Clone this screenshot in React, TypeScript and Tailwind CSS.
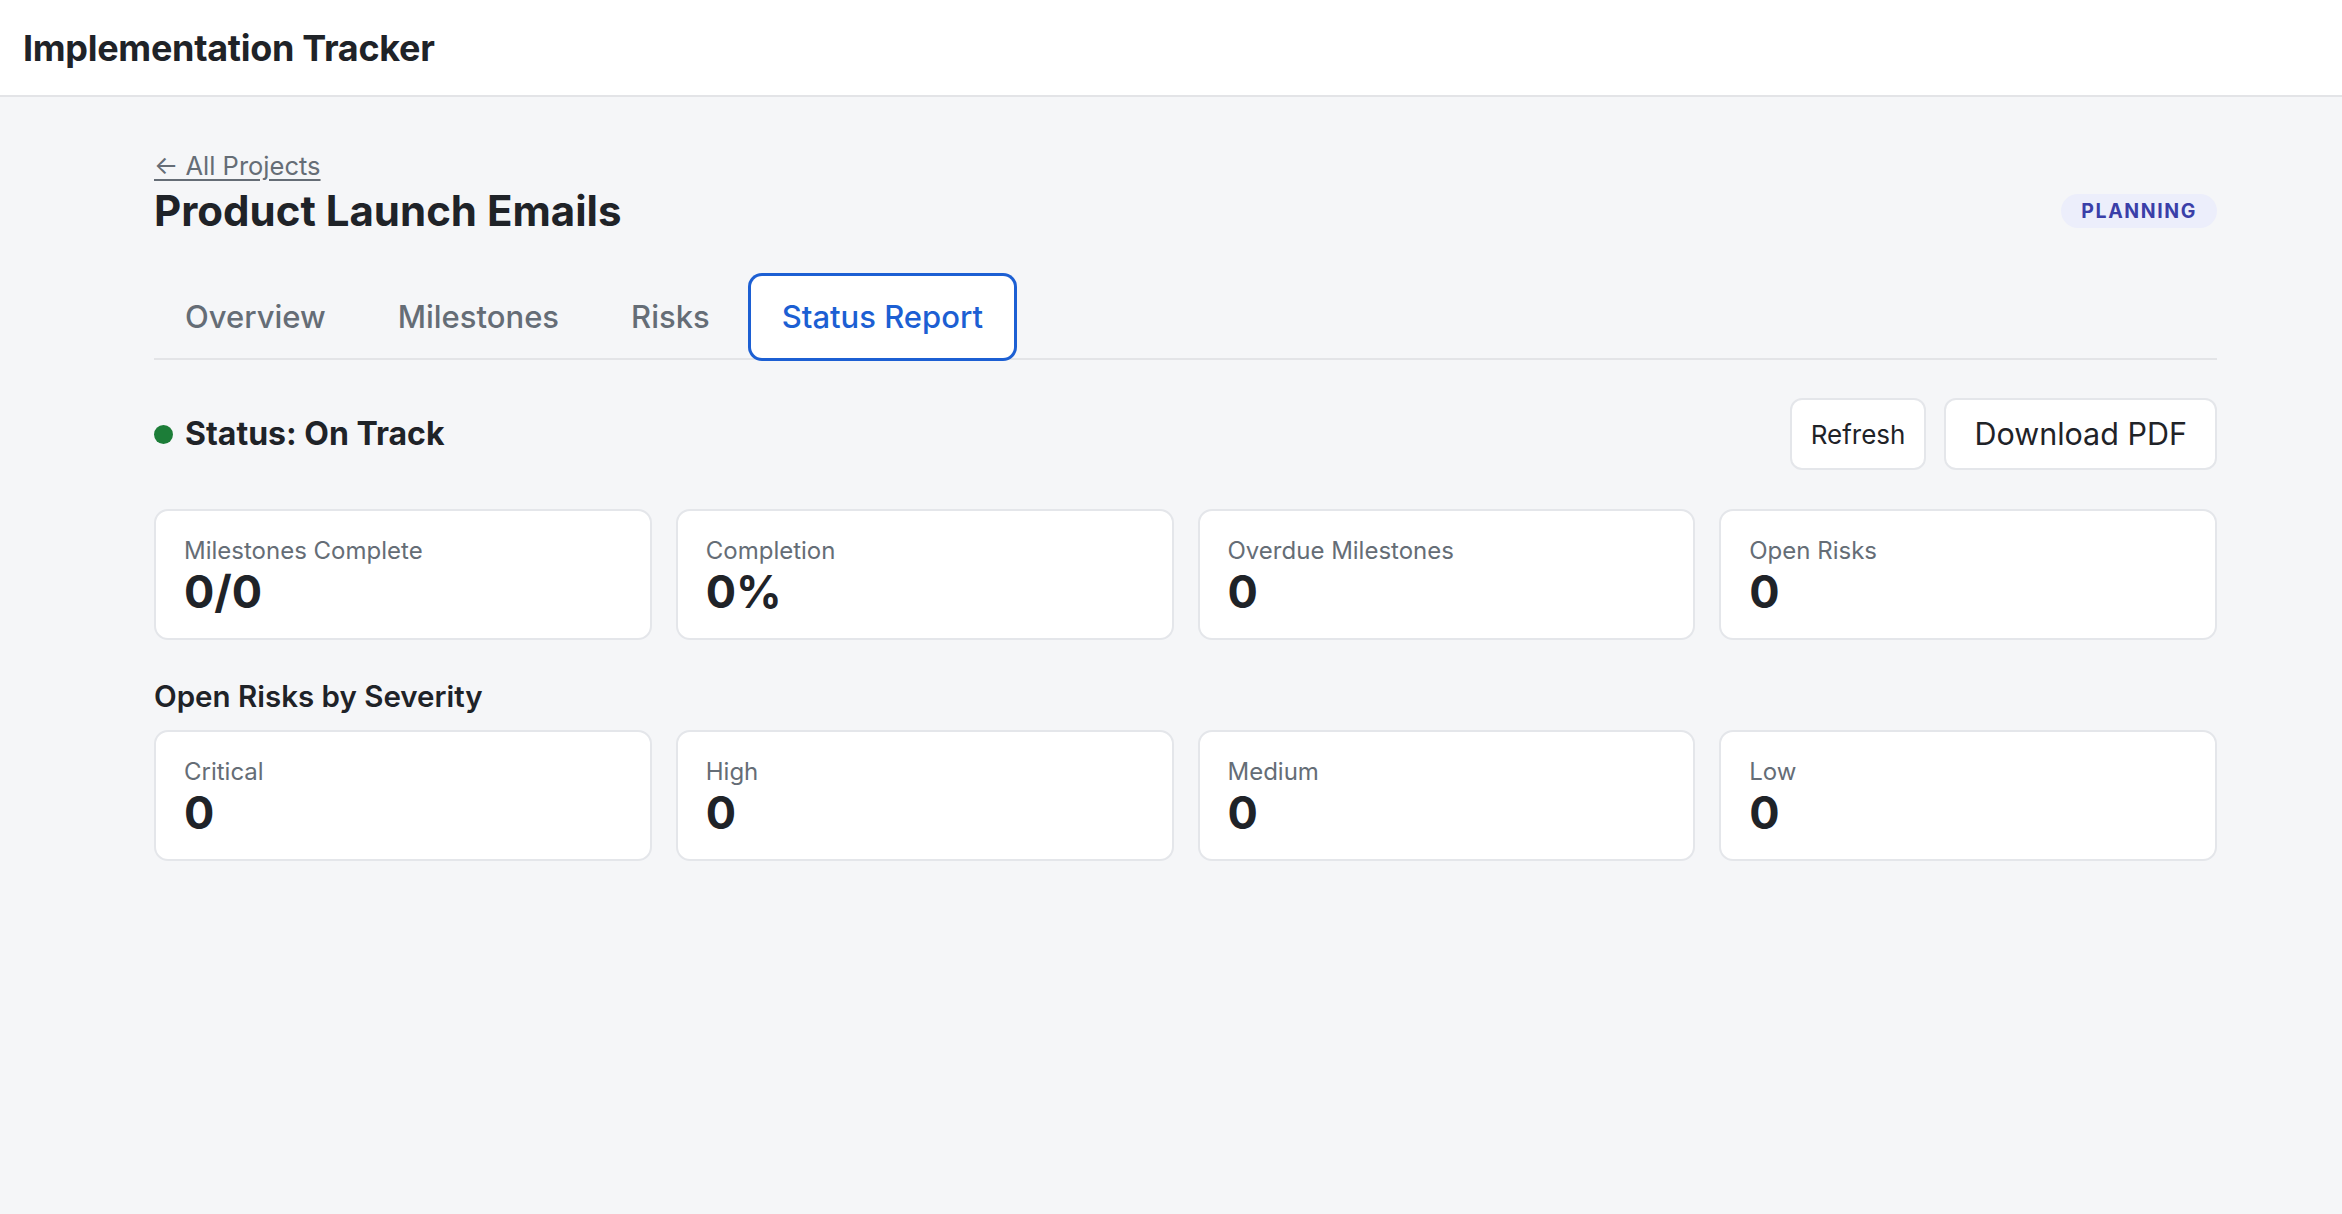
import React from "react";

type Stat = { label: string; value: string };

const summary: Stat[] = [
  { label: "Milestones Complete", value: "0/0" },
  { label: "Completion", value: "0%" },
  { label: "Overdue Milestones", value: "0" },
  { label: "Open Risks", value: "0" },
];

const severity: Stat[] = [
  { label: "Critical", value: "0" },
  { label: "High", value: "0" },
  { label: "Medium", value: "0" },
  { label: "Low", value: "0" },
];

const tabs = ["Overview", "Milestones", "Risks", "Status Report"];

function StatCard({ stat }: { stat: Stat }) {
  return (
    <div className="bg-white border-2 border-[#e4e6ea] rounded-[14px] h-[131px] px-[28px] pt-[22px]">
      <div className="text-[24px] leading-[36px] text-[#656d76]">{stat.label}</div>
      <div className="text-[45px] leading-[46px] font-bold text-[#1f2328]">{stat.value}</div>
    </div>
  );
}

export default function App() {
  const active = "Status Report";

  return (
    <div
      className="min-h-[1214px] bg-[#f5f6f8] text-[#1f2328]"
      style={{ fontFamily: "Inter, 'Noto Sans', sans-serif" }}
    >
      <header className="h-[97px] bg-white border-b-2 border-[#e3e4e7] flex items-center px-[23px]">
        <h1 className="text-[36px] font-bold tracking-[-0.3px]">Implementation Tracker</h1>
      </header>

      <main className="ml-[154px] w-[2063px] pt-[51px]">
        <a href="#" className="text-[25.5px] leading-[36px] text-[#656d76] underline underline-offset-[4px]">
          ← All Projects
        </a>
        <div className="flex items-center justify-between">
          <h2 className="text-[42px] leading-[54px] font-bold">Product Launch Emails</h2>
          <span className="rounded-full bg-[#eceefb] text-[#3a3fa8] text-[19.5px] leading-[34px] h-[34px] px-[20px] font-bold tracking-[1.6px]">
            PLANNING
          </span>
        </div>

        <div className="mt-[38px] flex gap-[10px] border-b-2 border-[#e3e4e7]">
          {tabs.map((t) => (
            <button
              key={t}
              className={
                t === active
                  ? "px-[31px] pt-[18px] pb-[19px] text-[31px] leading-[45px] font-medium text-[#1c5fd3] rounded-[11px] ring-[3px] ring-[#1c5fd3] bg-white"
                  : "px-[31px] pt-[18px] pb-[19px] text-[31px] leading-[45px] font-medium text-[#656d76]"
              }
            >
              {t}
            </button>
          ))}
        </div>

        <div className="mt-[38px] flex items-center justify-between">
          <div className="flex items-center gap-[12px]">
            <span className="w-[19px] h-[19px] rounded-full bg-[#1c7d38]" />
            <span className="text-[32px] font-bold">Status: On Track</span>
          </div>
          <div className="flex gap-[18px]">
            <button className="h-[72px] bg-white border-2 border-[#e4e6ea] rounded-[12px] px-[19px] text-[26px]">
              Refresh
            </button>
            <button className="h-[72px] bg-white border-2 border-[#e4e6ea] rounded-[12px] px-[28px] text-[30.5px]">
              Download PDF
            </button>
          </div>
        </div>

        <div className="mt-[39px] grid grid-cols-4 gap-[24px]">
          {summary.map((s) => (
            <StatCard key={s.label} stat={s} />
          ))}
        </div>

        <h3 className="mt-[36px] mb-[14px] text-[29.5px] leading-[40px] font-semibold">Open Risks by Severity</h3>

        <div className="grid grid-cols-4 gap-[24px]">
          {severity.map((s) => (
            <StatCard key={s.label} stat={s} />
          ))}
        </div>
      </main>
    </div>
  );
}
